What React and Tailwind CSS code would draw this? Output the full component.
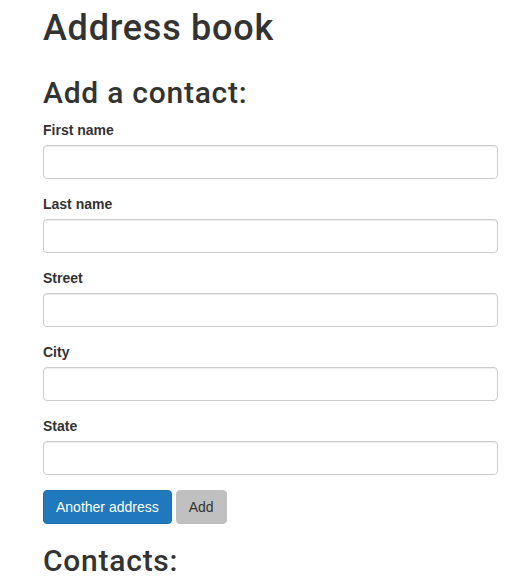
export default function App() {
  const fields = ["First name", "Last name", "Street", "City", "State"];
  const heading = "font-['Roboto',Arial,sans-serif] font-medium leading-[1.1] tracking-[0.75px]";

  return (
    <div className="pl-[43px] pr-[25px] text-[#333] font-['Liberation_Sans',Arial,sans-serif]">
      <h1 className={`pt-[9px] text-[36px] ${heading}`}>Address book</h1>

      <h2 className={`mt-[27px] text-[30px] ${heading}`}>Add a contact:</h2>

      <form className="mt-[11px]">
        {fields.map((f) => (
          <div key={f} className="mb-[15px]">
            <label className="block text-[14px] leading-[20px] font-bold mb-[5px]">{f}</label>
            <input
              type="text"
              className="block w-full h-[34px] px-3 border border-[#ccc] rounded-[4px] shadow-[inset_0_1px_1px_rgba(0,0,0,0.075)] bg-white outline-none"
            />
          </div>
        ))}

        <div className="flex gap-[4px]">
          <button
            type="button"
            className="h-[34px] px-3 text-[14px] leading-[20px] text-white bg-[#2079bd] border border-[#1c6fae] rounded-[4px]"
          >
            Another address
          </button>
          <button
            type="button"
            className="h-[34px] px-3 text-[14px] leading-[20px] text-[#333] bg-[#c0c0c0] border border-[#c0c0c0] rounded-[4px]"
          >
            Add
          </button>
        </div>
      </form>

      <h2 className={`mt-[20px] text-[30px] ${heading}`}>Contacts:</h2>
    </div>
  );
}
